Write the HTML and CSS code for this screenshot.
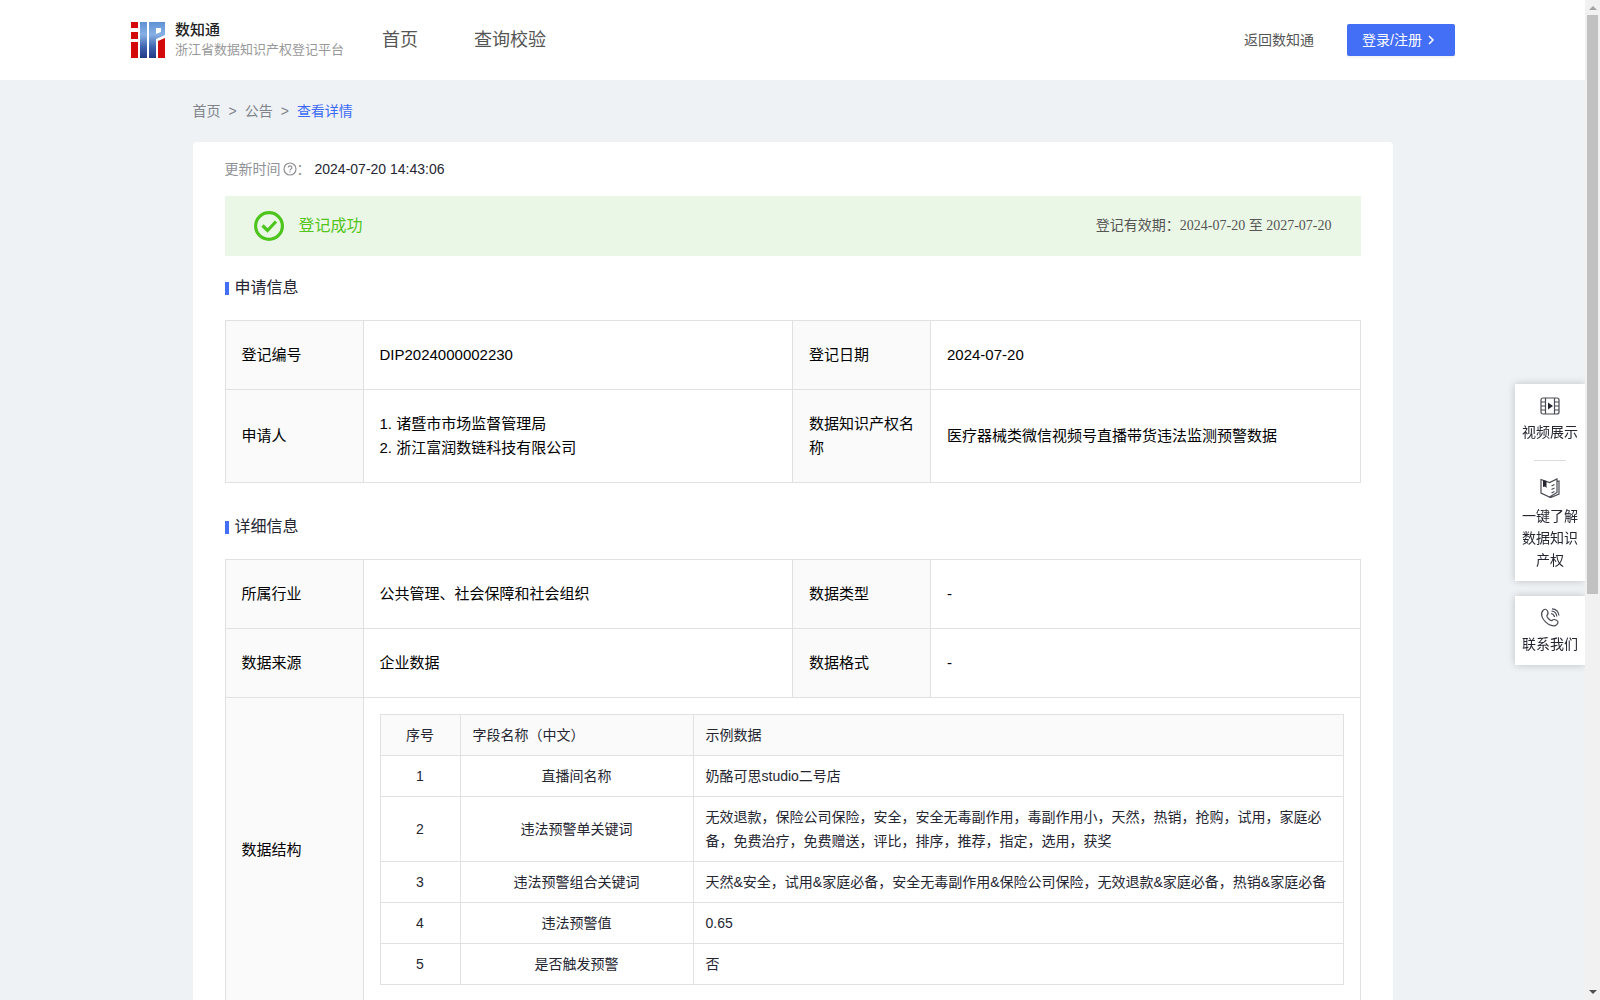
FILE: index.html
```html
<!DOCTYPE html>
<html lang="zh-CN">
<head>
<meta charset="utf-8">
<meta name="viewport" content="width=device-width, initial-scale=1">
<title>浙江省数据知识产权登记平台</title>
<link rel="stylesheet" href="styles.css">
</head>
<body>
<div class="window">
  <div class="page">
    <header class="header">
      <a class="brand" href="#">
        <svg class="brand-logo" viewBox="0 0 34 36" aria-hidden="true">
          <defs>
            <linearGradient id="logo-blue" x1="0" y1="0" x2="0" y2="1">
              <stop offset="0" stop-color="#5f92d4"/>
              <stop offset="0.35" stop-color="#86b0e4"/>
              <stop offset="0.7" stop-color="#3f62ae"/>
              <stop offset="1" stop-color="#243a86"/>
            </linearGradient>
          </defs>
          <path fill="#d40a0a" d="M0 0h7v6H0zM0 10h7v7H0zM0 20h7v16H0zM27 19l7-3v20h-7z"/>
          <path fill="url(#logo-blue)" d="M9 0h7v36H9zM18 0h16v13l-9 4v19h-7zM25 6v6l5-2V6z" fill-rule="evenodd"/>
        </svg>
        <span class="brand-text">
          <span class="brand-name">数知通</span>
          <span class="brand-sub">浙江省数据知识产权登记平台</span>
        </span>
      </a>
      <nav class="nav">
        <a href="#">首页</a>
        <a href="#">查询校验</a>
      </nav>
      <div class="header-actions">
        <a class="back-link" href="#">返回数知通</a>
        <button class="login" type="button">登录/注册
          <svg class="login-arrow" viewBox="0 0 8 10" aria-hidden="true"><path d="M2 1l4 4-4 4"/></svg>
        </button>
      </div>
    </header>

    <main class="main">
      <nav class="crumbs">
        <a href="#">首页</a><span>&gt;</span><a href="#">公告</a><span>&gt;</span><a class="current" href="#">查看详情</a>
      </nav>

      <section class="card">
        <p class="updated">
          <span class="updated-label">更新时间</span>
          <svg class="help" viewBox="0 0 14 14" aria-hidden="true"><circle cx="7" cy="7" r="6"/><path d="M5.2 5.6a1.8 1.8 0 1 1 2.6 1.6c-.6.3-.8.6-.8 1.2M7 9.4v1.2"/></svg>
          <span class="updated-label">：</span>
          <span class="updated-time">2024-07-20 14:43:06</span>
        </p>

        <div class="status">
          <svg class="status-icon" viewBox="0 0 30 30" aria-hidden="true"><circle cx="15" cy="15" r="13.4"/><path class="tick" d="M8.500 14.500l5 5 8.500-9"/></svg>
          <span class="status-text">登记成功</span>
          <span class="status-date">登记有效期：2024-07-20 至 2027-07-20</span>
        </div>

        <h2 class="title">申请信息</h2>
        <table class="info">
          <colgroup><col class="c-label"><col class="c-value"><col class="c-label"><col class="c-value"></colgroup>
          <tr><th scope="row">登记编号</th><td>DIP2024000002230</td><th scope="row">登记日期</th><td>2024-07-20</td></tr>
          <tr><th scope="row">申请人</th><td>1. 诸暨市市场监督管理局<br>2. 浙江富润数链科技有限公司</td><th scope="row">数据知识产权名称</th><td>医疗器械类微信视频号直播带货违法监测预警数据</td></tr>
        </table>

        <h2 class="title">详细信息</h2>
        <table class="info">
          <colgroup><col class="c-label"><col class="c-value"><col class="c-label"><col class="c-value"></colgroup>
          <tr><th scope="row">所属行业</th><td>公共管理、社会保障和社会组织</td><th scope="row">数据类型</th><td>-</td></tr>
          <tr><th scope="row">数据来源</th><td>企业数据</td><th scope="row">数据格式</th><td>-</td></tr>
          <tr>
            <th scope="row">数据结构</th>
            <td class="nested" colspan="3">
              <table class="fields">
                <colgroup><col class="f-no"><col class="f-name"><col></colgroup>
                <thead><tr><th scope="col">序号</th><th scope="col">字段名称（中文）</th><th scope="col">示例数据</th></tr></thead>
                <tbody>
                  <tr><td>1</td><td>直播间名称</td><td>奶酪可思studio二号店</td></tr>
                  <tr><td>2</td><td>违法预警单关键词</td><td>无效退款，保险公司保险，安全，安全无毒副作用，毒副作用小，天然，热销，抢购，试用，家庭必备，免费治疗，免费赠送，评比，排序，推荐，指定，选用，获奖</td></tr>
                  <tr><td>3</td><td>违法预警组合关键词</td><td>天然&amp;安全，试用&amp;家庭必备，安全无毒副作用&amp;保险公司保险，无效退款&amp;家庭必备，热销&amp;家庭必备</td></tr>
                  <tr><td>4</td><td>违法预警值</td><td>0.65</td></tr>
                  <tr><td>5</td><td>是否触发预警</td><td>否</td></tr>
                </tbody>
              </table>
            </td>
          </tr>
        </table>
      </section>
    </main>

    <aside class="side">
      <div class="side-box">
        <a class="side-item" href="#">
          <svg viewBox="0 0 20 20" aria-hidden="true"><rect x="1" y="2" width="18" height="16" rx="2"/><path d="M5.500 2v16M14.500 2v16M1 6h4.500M1 10h4.500M1 14h4.500M14.500 6H19M14.500 10H19M14.500 14H19"/><path class="solid" d="M8 6.500l5 3.500-5 3.500z"/></svg>
          视频展示
        </a>
        <a class="side-item" href="#">
          <svg viewBox="0 0 20 20" aria-hidden="true"><path d="M1 1.500L9.500 4.500 17 1v13.500L9.500 19 1 15zM17 3.500l2-.5v13l-9.500 4M11.500 8l3-1.500M11.500 11.500l3-1.500M11.500 15l3-1.500"/><path class="solid" d="M3 2l3.500 1v7L5 8.500 3 9z"/></svg>
          一键了解数据知识产权
        </a>
      </div>
      <div class="side-box">
        <a class="side-item" href="#">
          <svg viewBox="0 0 20 20" aria-hidden="true"><path d="M3 2.500C5 .5 6.500 1 7.500 3s1 3-.5 4.500c-1 1 3.500 6 5 5 1.500-1.500 2.500-1.500 4.500-.2s2 2.700.2 4.400C11 21.500-3 9 3 2.500zM11 5.500c2 .3 3.200 1.700 3.500 3.500M11.500 3c3 .3 5 2.500 5.300 5.500M12 .8c4 .2 6.500 3 7 6.700"/></svg>
          联系我们
        </a>
      </div>
    </aside>
  </div>

  <div class="scrollbar" aria-hidden="true">
    <span class="arrow arrow-up"></span>
    <span class="thumb"></span>
    <span class="arrow arrow-down"></span>
  </div>
</div>
</body>
</html>
```
FILE: styles.css
```css
* {
  box-sizing: border-box;
}

body {
  margin: 0;
  font-family: "Liberation Sans", "Noto Sans CJK SC", sans-serif;
  font-size: 14px;
  line-height: 24px;
  color: #252632;
}

a {
  color: inherit;
  text-decoration: none;
}

.window {
  display: flex;
  height: 100vh;
  overflow: hidden;
}

.page {
  flex: 1;
  min-width: 0;
  overflow: hidden;
  background: #eef2f5;
}

/* Header */
.header {
  display: flex;
  align-items: center;
  height: 80px;
  padding: 0 130px 0 131px;
  background: #fff;
}

.brand {
  display: flex;
  align-items: center;
  gap: 10px;
}

.brand-logo {
  width: 34px;
  height: 36px;
}

.brand-text {
  display: flex;
  flex-direction: column;
}

.brand-name {
  font-size: 15px;
  font-weight: 500;
  line-height: 20px;
  color: #222;
}

.brand-sub {
  font-size: 13px;
  line-height: 20px;
  color: #999;
}

.nav {
  display: flex;
  gap: 56px;
  margin-left: 38px;
  font-size: 18px;
  color: #555;
}

.header-actions {
  display: flex;
  align-items: center;
  gap: 33px;
  margin-left: auto;
  color: #555;
}

.login {
  display: flex;
  align-items: center;
  gap: 5px;
  width: 108px;
  height: 32px;
  padding: 0 15px;
  border: 0;
  border-radius: 2px;
  background: #436ef6;
  box-shadow: 0 2px 0 rgba(0, 0, 0, 0.04);
  color: #fff;
  font: inherit;
  white-space: nowrap;
}

.login-arrow {
  width: 8px;
  height: 10px;
  fill: none;
  stroke: #fff;
  stroke-width: 1.500;
}

/* Content */
.main {
  max-width: 1200px;
  margin: 0 auto;
}

.crumbs {
  display: flex;
  gap: 8px;
  padding: 19px 0;
  color: #808389;
}

.crumbs .current {
  color: #3c6af5;
}

.card {
  padding: 15px 32px 32px;
  border-radius: 4px;
  background: #fff;
}

.updated {
  display: flex;
  align-items: center;
  margin: 0 0 15px;
}

.updated-label {
  color: #909196;
}

.help {
  width: 14px;
  height: 14px;
  margin-left: 2px;
  fill: none;
  stroke: #909196;
  stroke-width: 1.2;
}

.updated-time {
  margin-left: 4px;
}

.status {
  display: flex;
  align-items: center;
  height: 60px;
  padding: 0 29px;
  background: #ebf7e6;
}

.status-icon {
  width: 30px;
  height: 30px;
  fill: none;
  stroke: #4dc51d;
  stroke-width: 3.2;
}

.status-text {
  margin-left: 15px;
  font-size: 16px;
  color: #52c41a;
}

.status-date {
  margin-left: auto;
  font-family: "Liberation Serif", "Noto Sans CJK SC", serif;
  color: #555;
}

.title {
  display: flex;
  align-items: center;
  gap: 6px;
  margin: 20px 0;
  font-size: 16px;
  font-weight: 400;
  line-height: 24px;
}

.title::before {
  content: "";
  width: 4px;
  height: 13px;
  background: #436ef6;
}

/* Tables */
table {
  width: 100%;
  border-collapse: collapse;
  table-layout: fixed;
}

th,
td {
  border: 1px solid #e1e1e1;
  font-weight: 400;
  text-align: left;
}

th {
  background: #fafafa;
}

.info {
  margin-bottom: 32px;
  font-size: 15px;
  color: #000;
}

.info > tbody > tr > th,
.info > tbody > tr > td {
  padding: 22px 16px;
}

.info > tbody > tr > .nested {
  padding: 16px;
}

.c-label {
  width: 138px;
}

.fields {
  font-size: 14px;
  color: #252632;
}

.fields th,
.fields td {
  padding: 8px 12px;
}

.f-no {
  width: 80px;
}

.f-name {
  width: 233px;
}

.fields th:first-child,
.fields td:first-child,
.fields td:nth-child(2) {
  text-align: center;
}

/* Floating shortcuts, pinned over the page */
.side {
  position: fixed;
  top: 384px;
  right: 15px;
  width: 70px;
}

.side-box {
  margin-bottom: 15px;
  background: #fff;
  box-shadow: 0 0 8px rgba(0, 0, 0, 0.2);
  clip-path: inset(-8px 0 -8px -8px);
}

.side-item {
  display: flex;
  flex-direction: column;
  align-items: center;
  gap: 5px;
  padding: 12px 7px 10px;
  line-height: 22px;
  text-align: center;
}

.side-item + .side-item {
  gap: 7px;
  padding-top: 7px;
}

.side-item + .side-item::before {
  content: "";
  width: 32px;
  height: 1px;
  margin-bottom: 10px;
  background: #ddd;
}

.side-item svg {
  width: 20px;
  height: 20px;
  fill: none;
  stroke: #4a4b55;
  stroke-width: 1.2;
}

.side-item .solid {
  fill: #252632;
  stroke: none;
}

/* Scrollbar */
.scrollbar {
  display: flex;
  flex-direction: column;
  align-items: center;
  width: 15px;
  padding: 6px 0;
  background: #f1f1f1;
}

.arrow {
  border: 4px solid transparent;
}

.arrow-up {
  border-top: 0;
  border-bottom-color: #a3a3a3;
}

.arrow-down {
  margin-top: auto;
  border-bottom: 0;
  border-top-color: #505050;
}

.thumb {
  width: 11px;
  height: calc(58% + 6px);
  margin-top: 5px;
  background: #c1c1c1;
}
```
